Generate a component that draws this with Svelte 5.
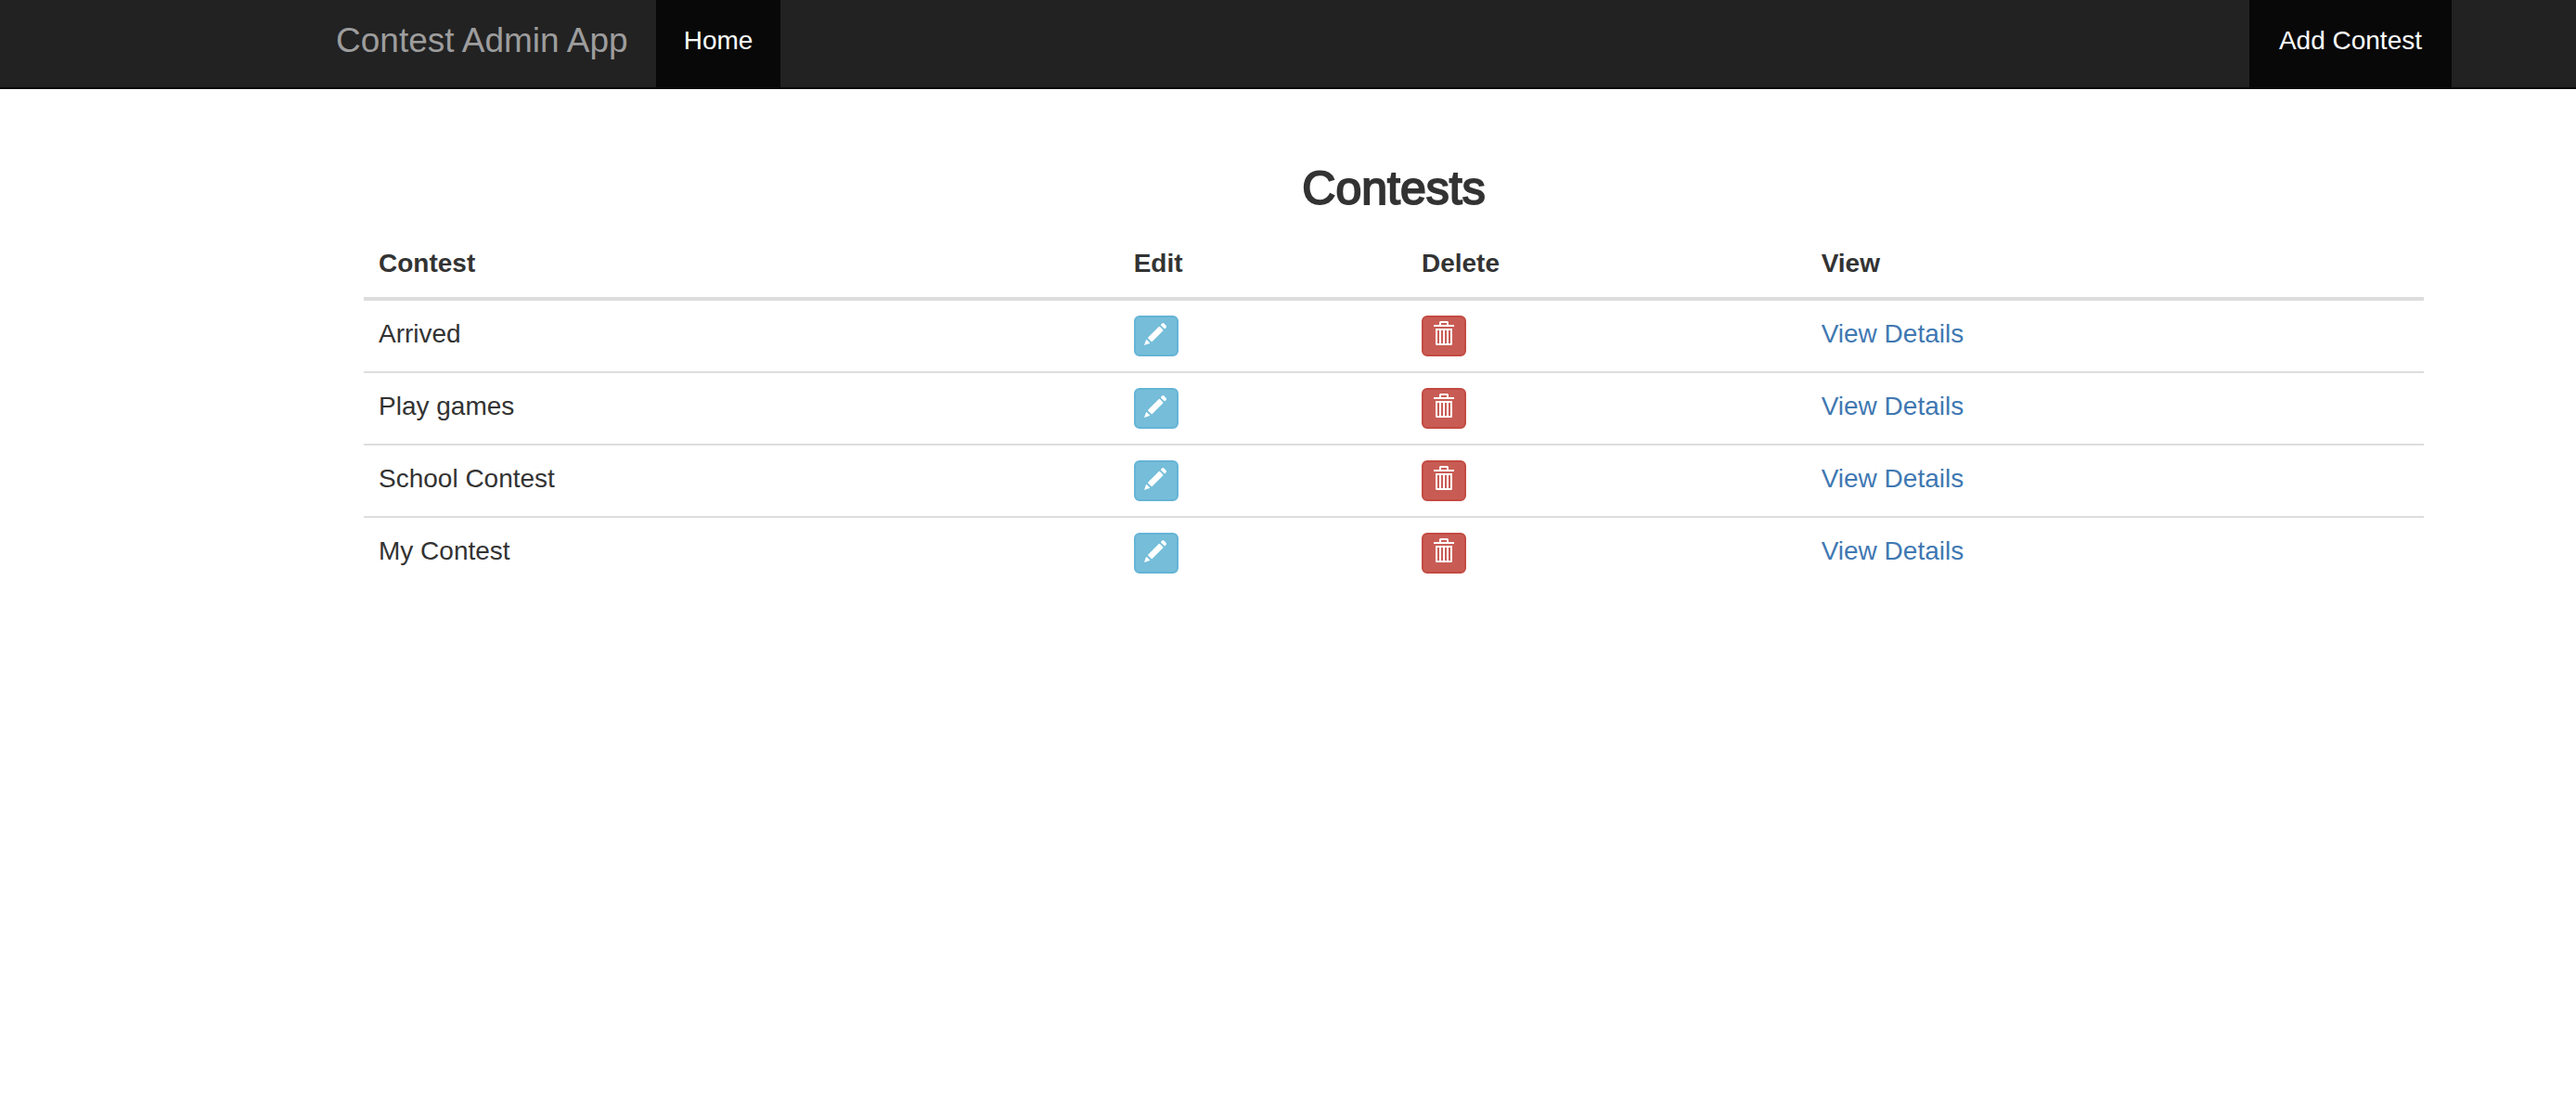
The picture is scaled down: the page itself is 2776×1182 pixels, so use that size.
<script>
  const contests = ['Arrived', 'Play games', 'School Contest', 'My Contest'];
</script>

<header class="navbar">
  <nav class="container bar">
    <a class="brand" href="#home">Contest Admin App</a>
    <a class="link" href="#home" aria-current="page">Home</a>
    <a class="link add" href="#add">Add Contest</a>
  </nav>
</header>

<main class="container content">
  <h3>Contests</h3>
  <table>
    <colgroup>
      <col class="col-name" />
      <col class="col-edit" />
      <col class="col-delete" />
      <col />
    </colgroup>
    <thead>
      <tr>
        <th scope="col">Contest</th>
        <th scope="col">Edit</th>
        <th scope="col">Delete</th>
        <th scope="col">View</th>
      </tr>
    </thead>
    <tbody>
      {#each contests as name}
        <tr>
          <td>{name}</td>
          <td>
            <button class="info" type="button" aria-label={`Edit ${name}`}>
              <svg viewBox="0 0 44 40" aria-hidden="true">
                <path d="M9 30 11 24.3Q11.4 23.6 12 24.2L15 27.2Q15.5 27.8 14.8 28.1Z" />
                <path d="M13.3 21.5 24.8 10Q25.4 9.6 26 10L29.2 13.2Q29.7 13.8 29.2 14.4L17.7 25.9Q17 26.4 16.4 25.8L13.3 22.7Q12.8 22.1 13.3 21.5Z" />
                <path d="M27.2 7.6 28.3 6.5Q29.3 5.7 30.4 6.6L32.7 8.9Q33.5 10 32.7 11L31.7 12Q31.1 12.5 30.5 12L27.2 8.8Q26.7 8.2 27.2 7.6Z" />
              </svg>
            </button>
          </td>
          <td>
            <button class="danger" type="button" aria-label={`Delete ${name}`}>
              <svg viewBox="0 0 44 40" aria-hidden="true">
                <path d="M11 8H17V5.5Q17 4 18.5 4H25.5Q27 4 27 5.5V8H33V10H11ZM19 6V8H25V6Z" />
                <path d="M13 12H31V28.5Q31 30 29.5 30H14.5Q13 30 13 28.5ZM15 14V28H17V14ZM19 14V28H21V14ZM23 14V28H25V14ZM27 14V28H29V14Z" />
              </svg>
            </button>
          </td>
          <td><a href="#details">View Details</a></td>
        </tr>
      {/each}
    </tbody>
  </table>
</main>

<style>
  :global(body) {
    margin: 0;
    background: #fff;
    color: #333;
    font: 28px/40px "Helvetica Neue", Helvetica, "Liberation Sans", Arial, sans-serif;
  }

  .navbar,
  .content {
    --side: 228px;
  }

  .navbar {
    padding-left: var(--side);
    background: #222;
    border-bottom: 2px solid #080808;
  }

  .container {
    box-sizing: border-box;
    max-width: 2340px;
    margin: 0 auto;
    padding: 0 30px;
  }

  .bar {
    display: flex;
    align-items: stretch;
  }

  .bar a {
    text-decoration: none;
    line-height: 40px;
    padding: 24px 30px 30px;
  }

  .bar .brand {
    padding-left: 0;
    font-size: 37px;
    color: #9d9d9d;
  }

  .bar .link {
    color: #fff;
    background: #080808;
  }

  .bar .add {
    margin-left: auto;
    padding-left: 32px;
    padding-right: 32px;
  }

  .content {
    max-width: calc(2340px + var(--side));
    padding: 80px 60px 60px calc(60px + var(--side));
  }

  h3 {
    margin: 0 0 18px;
    font-size: 50px;
    line-height: 54px;
    font-weight: 400;
    text-align: center;
    -webkit-text-stroke: 2px #333;
  }

  table {
    width: 100%;
    table-layout: fixed;
    border-collapse: separate;
    border-spacing: 0;
  }

  .col-name {
    width: 36.65%;
  }

  .col-edit {
    width: 13.98%;
  }

  .col-delete {
    width: 19.4%;
  }

  th,
  td {
    padding: 16px;
    text-align: left;
    vertical-align: top;
  }

  th {
    font-weight: 700;
    border-bottom: 4px solid #ddd;
  }

  tr + tr td {
    border-top: 2px solid #ddd;
  }

  td a {
    color: #4078b2;
    text-decoration: none;
  }

  button {
    display: block;
    box-sizing: border-box;
    width: 48px;
    height: 44px;
    padding: 0;
    border: 2px solid;
    border-radius: 6px;
    cursor: pointer;
  }

  button svg {
    display: block;
    width: 100%;
    height: 100%;
    fill: #fff;
    fill-rule: evenodd;
  }

  .info {
    background: #75bdd9;
    border-color: #65b4d5;
  }

  .danger {
    background: #c85c55;
    border-color: #c34a42;
  }
</style>
